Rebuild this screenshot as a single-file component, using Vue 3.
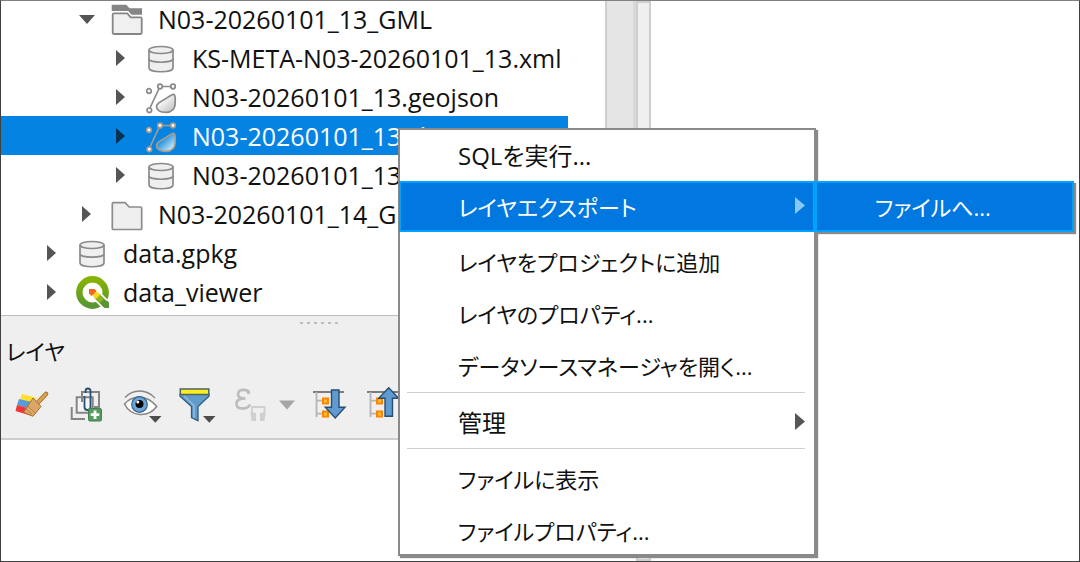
<script setup>
const rows = [
  { level: 1, icon: 'folderOpen', label: 'N03-20260101_13_GML', open: true },
  { level: 2, icon: 'database', label: 'KS-META-N03-20260101_13.xml' },
  { level: 2, icon: 'vector', label: 'N03-20260101_13.geojson' },
  { level: 2, icon: 'vector', label: 'N03-20260101_13.shp', selected: true },
  { level: 2, icon: 'database', label: 'N03-20260101_13.xml' },
  { level: 1, icon: 'folder', label: 'N03-20260101_14_GML' },
  { level: 0, icon: 'database', label: 'data.gpkg' },
  { level: 0, icon: 'qgis', label: 'data_viewer' },
]

const menu = [
  { label: 'SQLを実行...', large: true },
  { label: 'レイヤエクスポート', submenu: true, active: true },
  { gap: true },
  { label: 'レイヤをプロジェクトに追加' },
  { label: 'レイヤのプロパティ...' },
  { label: 'データソースマネージャを開く...' },
  { separator: true },
  { label: '管理', submenu: true, large: true },
  { separator: true },
  { label: 'ファイルに表示' },
  { label: 'ファイルプロパティ...' },
]
</script>

<template>
  <main class="window">
    <div class="dock">
      <section class="browser">
        <ul class="tree" role="tree">
          <li
            v-for="row in rows"
            :key="row.label"
            class="row"
            :class="['level-' + row.level, { selected: row.selected }]"
            role="treeitem"
            :aria-selected="!!row.selected"
          >
            <button class="toggle" type="button" :aria-label="row.label">
              <svg width="16" height="18" viewBox="0 0 16 18">
                <path v-if="row.open" d="M0 5h16L8 14z" />
                <path v-else d="M3 1L12 9L3 17z" />
              </svg>
            </button>
            <svg class="icon" width="32" height="33" viewBox="0 0 32 33">
              <g v-if="row.icon === 'folderOpen'">
                <path d="M.7 1.700h14.500l3.300 3.600H31v6.500H20.500L17 7.900H.7z" fill="#858585" />
                <path d="M1.700 11.500q0-1.200 1.200-1.200h13.400l3.400 4h9.800q1.200 0 1.200 1.200v14.300q0 1.200-1.200 1.200H2.900q-1.200 0-1.200-1.200z" fill="#f0f0f0" stroke="#fff" stroke-width="4" />
                <path d="M1.700 11.500q0-1.200 1.200-1.200h13.400l3.400 4h9.800q1.200 0 1.200 1.200v14.300q0 1.200-1.200 1.200H2.900q-1.200 0-1.200-1.200z" fill="#f0f0f0" stroke="#858585" stroke-width="1.800" />
              </g>
              <path
                v-else-if="row.icon === 'folder'"
                d="M1.300 5.700q0-1 1-1h11.800l4.100 4.300h11.500q1 0 1 1v20.500q0 1-1 1H2.300q-1 0-1-1z"
                fill="#efefef" stroke="#8c8c8c" stroke-width="1.700"
              />
              <g v-else-if="row.icon === 'database'" fill="#efefef" stroke="#8a8a8a" stroke-width="1.700">
                <path d="M4 8v18c0 5 24 5 24 0V8" />
                <ellipse cx="16" cy="8" rx="12" ry="3.500" />
                <path d="M4 17c0 4.300 24 4.300 24 0" fill="none" />
              </g>
              <g v-else-if="row.icon === 'vector'" fill="none" :stroke="row.selected ? '#a59c8b' : '#8a8a8a'" stroke-width="1.700">
                <path d="M4.500 28L15 5.500h13" />
                <g :fill="row.selected ? '#fff' : '#f7f7f7'">
                  <circle cx="4" cy="10" r="2.300" />
                  <circle cx="15" cy="5.500" r="2.300" />
                  <circle cx="28" cy="5.500" r="2.300" />
                  <circle cx="4.300" cy="29.300" r="2.300" />
                </g>
                <defs>
                  <linearGradient id="blobGray" x1="0" y1="0" x2="1" y2="1">
                    <stop offset=".3" stop-color="#fafafa" /><stop offset="1" stop-color="#b8b8b8" />
                  </linearGradient>
                  <linearGradient id="blobBlue" x1="0" y1="0" x2="1" y2="1">
                    <stop offset=".3" stop-color="#168fdd" /><stop offset="1" stop-color="#fff" />
                  </linearGradient>
                </defs>
                <path
                  d="M27.500 13.500C30.500 12.700 30.300 17 30.200 22C30.200 28 26.500 31.400 21 31.400C14.500 31.400 11.300 28.700 11.500 25.200C11.900 20.700 20.500 18.700 24.500 15.200z"
                  :fill="row.selected ? 'url(#blobBlue)' : 'url(#blobGray)'"
                />
              </g>
              <g v-else>
                <defs>
                  <linearGradient id="ring" x1="0" y1="0" x2="0" y2="1">
                    <stop offset="0" stop-color="#86b300" /><stop offset="1" stop-color="#589632" />
                  </linearGradient>
                </defs>
                <circle cx="16.500" cy="16.500" r="13.200" fill="none" stroke="url(#ring)" stroke-width="6.400" />
                <path d="M18 17L35 34" stroke="#fff" stroke-width="10" />
                <path d="M21 20L29.500 28.500" stroke="#589632" stroke-width="6.500" />
                <path d="M26 29.500L31 24.500L33 26.500V32h-4.500z" fill="#589632" />
                <path d="M20 19L26 25" stroke="#8fb61c" stroke-width="6" />
                <path d="M17.500 16.500L22 21" stroke="#fbd81f" stroke-width="6" />
                <path d="M13 13h5.500l2 2-5 5-2.500-2.500z" fill="#f4671f" />
              </g>
            </svg>
            <span>{{ row.label }}</span>
          </li>
        </ul>
        <div class="scrollbar"></div>
      </section>

      <section class="layers">
        <div class="grip"><i v-for="n in 6" :key="n"></i></div>
        <h2>レイヤ</h2>
        <div class="toolbar">
          <button type="button" aria-label="スタイル">
            <svg width="36" height="38" viewBox="0 0 36 38">
              <path d="M8 8l15 4-4 6L6 15z" fill="#ffe02e" />
              <path d="M5 13l13 3-3 7L3 19z" fill="#5b9bd5" />
              <path d="M3 19l10 3 5 8L1.500 25z" fill="#ee3537" />
              <path d="M32 8L22.500 18" stroke="#a96f2c" stroke-width="4.600" stroke-linecap="round" />
              <path d="M32 8L22.500 18" stroke="#dda251" stroke-width="2.600" stroke-linecap="round" />
              <path d="M19 12l8 8.500-8 9.800-9.500-4z" fill="#dca667" stroke="#a9712f" />
              <path d="M14 20l7 7M12 23l6 5" stroke="#bd8440" />
            </svg>
          </button>
          <button type="button" aria-label="グループを追加">
            <svg width="36" height="38" viewBox="0 0 36 38">
              <g fill="none" stroke="#858585" stroke-width="2">
                <path d="M2.700 21v12H16M13 9V6h17v15.300h-3" />
                <path d="M7.700 11.300h16v15.400h-16z" fill="#f4f4f4" />
                <path d="M13 16V6h17v15h-5" />
              </g>
              <path d="M15.500 10v11q0 3 3 3t3-3V5q0-2.500-2.500-2.500T16.500 5v2" fill="none" stroke="#284f74" stroke-width="1.800" />
              <rect x="19.500" y="22.500" width="13" height="12.500" rx="1.500" fill="#559b61" stroke="#3f824c" />
              <path d="M26 24.500v8.500M21.700 28.700h8.600" stroke="#fff" stroke-width="2.800" />
            </svg>
          </button>
          <button type="button" aria-label="表示の管理">
            <svg width="38" height="38" viewBox="0 0 38 38">
              <path d="M.5 18C8 9 23 8 32.700 20.500C24 32 7 31 .5 18z" fill="#fff" stroke="#858585" stroke-width="1.500" />
              <path d="M1 11.500C9 3 22 2.500 31 12" fill="none" stroke="#858585" stroke-width="1.500" />
              <circle cx="15.500" cy="18.500" r="7.800" fill="#6fa6d8" stroke="#36638c" stroke-width="1.200" />
              <circle cx="15.500" cy="18" r="4" fill="#050505" />
              <circle cx="13.800" cy="16" r="1.500" fill="#fff" />
              <path d="M25 30h12.500l-6.200 6.700z" fill="#4c4c4c" />
            </svg>
          </button>
          <button type="button" aria-label="フィルタ">
            <svg width="38" height="38" viewBox="0 0 38 38">
              <path d="M1 8.300h29v2L19 20.500v14.200l-6.500-3V20.500L1 10.300z" fill="#619bc9" stroke="#315c80" stroke-width="1.300" />
              <path d="M5 10l10 9.500V32" fill="none" stroke="#91bbdd" stroke-width="1.500" />
              <rect x="1.300" y="3" width="28.500" height="5.500" fill="#ffed20" stroke="#4b665c" stroke-width="1.500" />
              <path d="M24 30h12.500l-6.200 6.700z" fill="#4c4c4c" />
            </svg>
          </button>
          <button type="button" class="expression" aria-label="式によるフィルタ" disabled>
            <svg width="36" height="38" viewBox="0 0 36 38">
              <path d="M15 6.500C13 3 4.500 2.500 4 8C3.800 11.500 7.500 12.500 11.500 12.500C5.500 12.500 2.500 14 2.500 17.700C2.500 24 13.500 24 16 18.500" fill="none" stroke="#bcbcbc" stroke-width="2.600" />
              <circle cx="14.500" cy="6.500" r="1.700" fill="#bcbcbc" />
              <path d="M18 30v-9h12.500v9" fill="none" stroke="#cfcfcf" stroke-width="1.800" />
              <path d="M16.500 26l5.500 1v8h-4.500zM31.500 26l-5.500 1v8h4.500z" fill="#cfcfcf" />
            </svg>
          </button>
          <button type="button" class="drop" aria-label="メニュー" disabled>
            <svg width="16" height="38" viewBox="0 0 16 38"><path d="M0 14.500h16L8 23.500z" fill="#a5a5a5" /></svg>
          </button>
          <button type="button" class="expand" aria-label="すべて展開">
            <svg width="36" height="38" viewBox="0 0 36 38">
              <path d="M0 6h31" stroke="#7d7d7d" stroke-width="2" />
              <path d="M3.500 6v25M3.500 14.700h6M3.500 27.700h6" fill="none" stroke="#b5b5b5" stroke-width="1.800" />
              <path d="M10 12.500h5v5h-5zM10 25.500h5v5h-5z" fill="#ffc233" stroke="#ff8200" stroke-width="2" />
              <path d="M18.500 4H26v17.300h6L22.200 32L12.300 21.300h6.200z" fill="#5f9bd0" stroke="#274f73" stroke-width="1.400" />
            </svg>
          </button>
          <button type="button" aria-label="すべて折りたたむ">
            <svg width="36" height="38" viewBox="0 0 36 38">
              <path d="M1 6h31" stroke="#7d7d7d" stroke-width="2" />
              <path d="M4.500 6v25M4.500 14.700h6M4.500 27.700h6" fill="none" stroke="#b5b5b5" stroke-width="1.800" />
              <path d="M11 12.500h5v5h-5zM11 25.500h5v5h-5z" fill="#ffc233" stroke="#ff8200" stroke-width="2" />
              <path d="M19 30.300V12.300h-6.300L22.700 1.700L32.700 12.300H26.500v18z" fill="#5f9bd0" stroke="#274f73" stroke-width="1.400" />
            </svg>
          </button>
        </div>
      </section>
      <div class="layer-list"></div>
    </div>
    <div class="splitter"></div>
    <div class="canvas"></div>

    <div class="menu" role="menu">
      <template v-for="(item, i) in menu" :key="i">
        <hr v-if="item.separator" />
        <div v-else-if="item.gap" class="gap"></div>
        <button v-else type="button" role="menuitem" class="item" :class="{ active: item.active, large: item.large }">
          {{ item.label }}
          <svg v-if="item.submenu" width="10" height="17" viewBox="0 0 10 17"><path d="M0 0l10 8.500L0 17z" /></svg>
        </button>
      </template>
    </div>
    <div class="submenu" role="menu">
      <button type="button" role="menuitem" class="item active">ファイルへ...</button>
    </div>
  </main>
</template>

<style>
body {
  margin: 0;
}
</style>

<style scoped>
.window {
  position: relative;
  display: flex;
  box-sizing: border-box;
  height: 100vh;
  overflow: hidden;
  border: 1px solid #404040;
  border-top-color: #808080;
  background: #fff;
  color: #111;
  font-family: "Open Sans", "Noto Sans CJK JP", sans-serif;
  font-size: 22px;
}
button {
  display: flex;
  padding: 0;
  border: 0;
  background: none;
  color: inherit;
  font: inherit;
}
svg {
  display: block;
  flex: none;
  overflow: visible;
}
.dock {
  display: flex;
  flex-direction: column;
  flex: 0 0 635px;
}
.browser {
  display: flex;
  overflow: hidden;
}
.tree {
  flex: 1;
  margin: -2px 0 4px;
  padding: 0;
  list-style: none;
  font-size: 25px;
}
.row {
  display: flex;
  align-items: center;
  box-sizing: border-box;
  height: 39px;
  margin-right: 37px;
  padding-top: 1px;
  white-space: nowrap;
}
.level-0 {
  padding-left: 43px;
}
.level-1 {
  padding-left: 78px;
}
.level-2 {
  padding-left: 112px;
}
.toggle {
  margin-right: 16px;
  fill: #555;
}
.icon {
  margin-right: 15px;
}
.selected {
  background: #0583e3;
  color: #fff;
}
.selected .toggle {
  fill: #0a3052;
}
.scrollbar {
  width: 26px;
  border-left: 2px solid #cfcfcf;
  border-right: 3px solid #d9d9d9;
  background: #e5e5e5;
}
.layers {
  height: 122px;
  border-top: 1px solid #bdbdbd;
  border-bottom: 2px solid #cecece;
  background: #efefef;
}
.grip {
  display: flex;
  justify-content: center;
  gap: 4px;
  padding-top: 6px;
}
.grip i {
  width: 3px;
  height: 2px;
  background: #bdbdbd;
}
h2 {
  margin: 10px 0 0 5px;
  font-size: 22px;
  font-weight: 400;
  line-height: 34px;
  font-feature-settings: "palt";
}
.toolbar {
  display: flex;
  gap: 17px;
  padding: 18px 13px 0;
}
.toolbar button {
  width: 38px;
}
.toolbar .expression {
  width: 28px;
}
.toolbar .drop {
  width: 17px;
}
.toolbar .expand {
  width: 36px;
}
.layer-list {
  flex: 1;
}
.splitter {
  width: 11px;
  border: 2px solid #cecece;
  background: #efefef;
}
.canvas {
  flex: 1;
}
.menu {
  position: absolute;
  top: 127px;
  left: 397px;
  box-sizing: border-box;
  width: 418px;
  height: 428px;
  border: 2px solid #8a8a8a;
  background: #fff;
  box-shadow: 2px 2px 1px #8a8a8a;
}
.item {
  box-sizing: border-box;
  align-items: center;
  justify-content: space-between;
  width: 100%;
  height: 52px;
  padding: 0 9px 2px 58px;
  white-space: nowrap;
  font-feature-settings: "palt";
  fill: #555;
}
.large {
  height: 51px;
  font-size: 24px;
}
.item.active {
  height: 51px;
  border: 2px solid #00a2ff;
  background: #0078e0;
  color: #fff;
  fill: #85c9f4;
}
.menu .active {
  width: calc(100% + 2px);
  margin: 0 -1px;
  padding: 0 8px 2px 57px;
}
.gap {
  height: 4px;
}
hr {
  height: 1px;
  margin: 0 9px 4px 7px;
  border: 0;
  background: #cfcfcf;
}
.submenu {
  position: absolute;
  top: 180px;
  left: 814px;
  width: 259px;
  box-shadow: 2px 2px 1px #8a8a8a;
}
</style>
